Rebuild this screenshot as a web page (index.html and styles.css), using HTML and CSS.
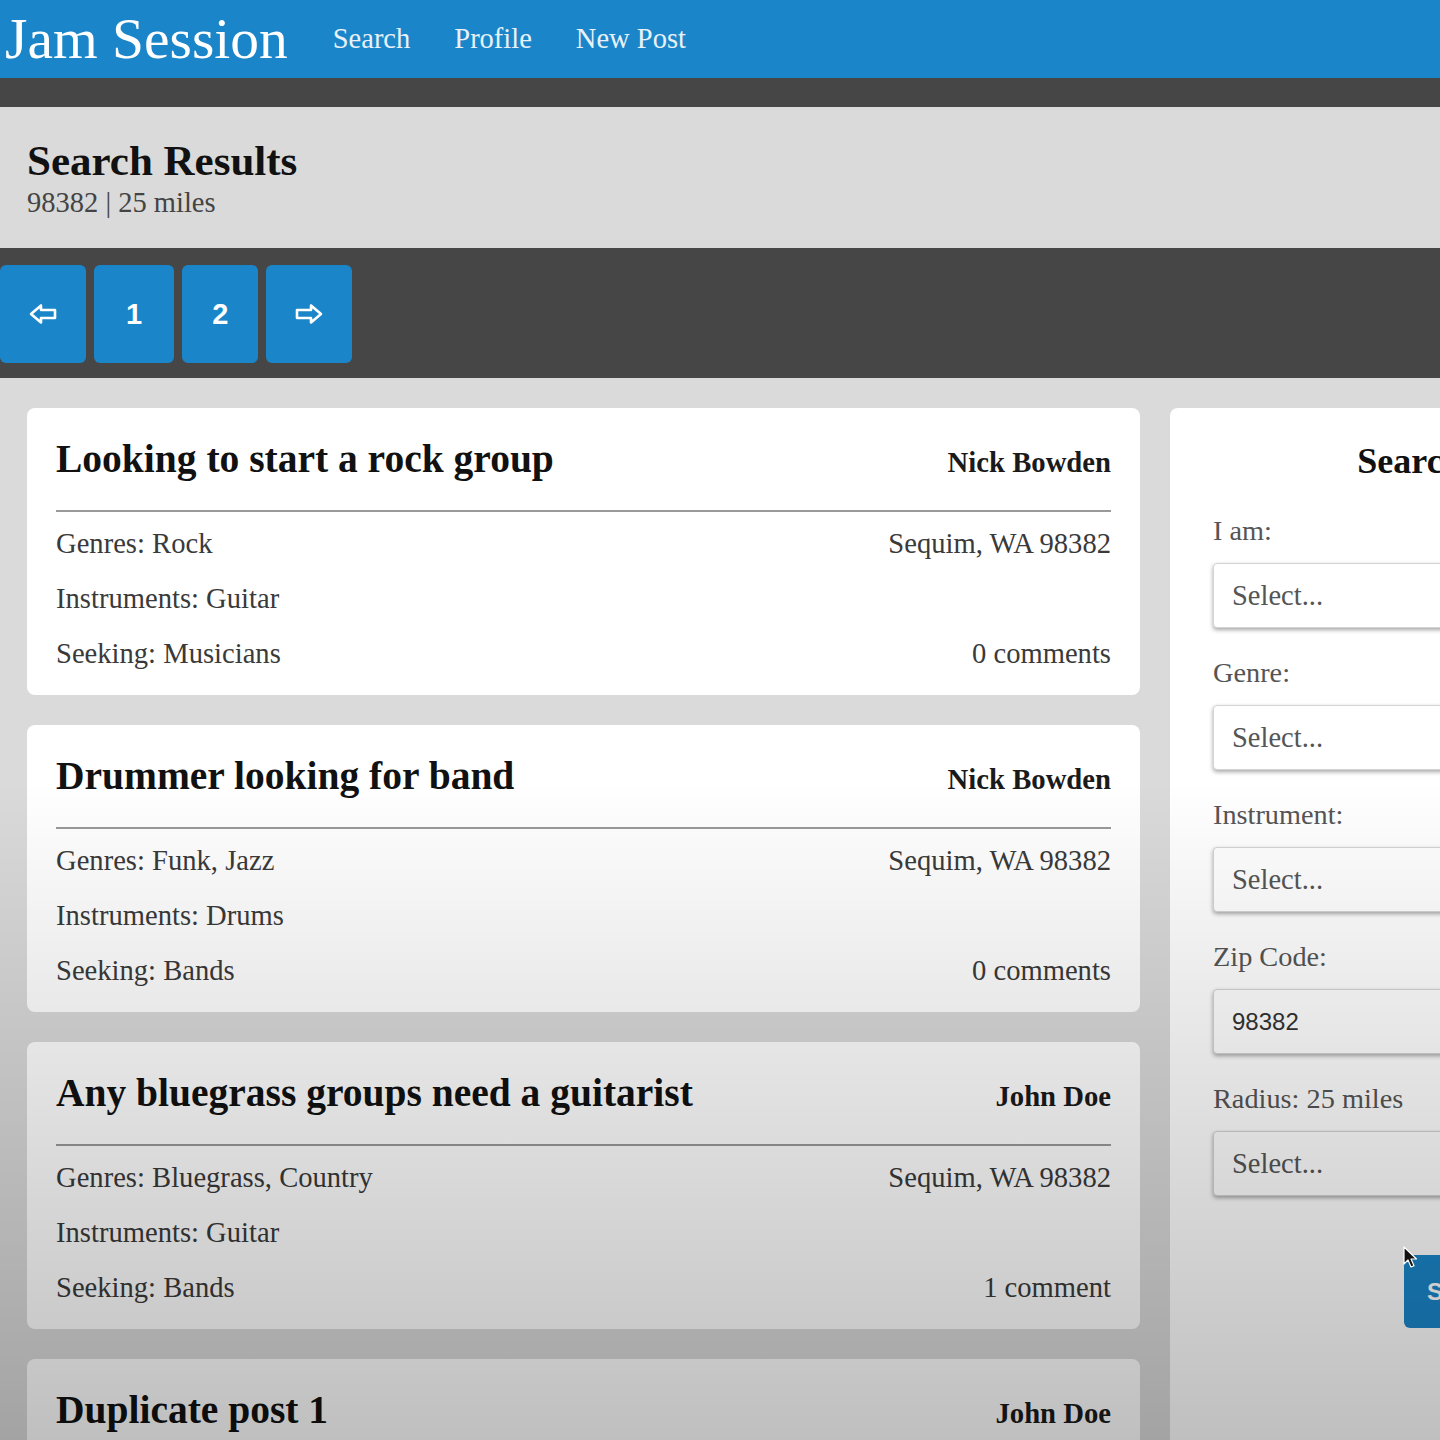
FILE: index.html
```html
<!DOCTYPE html>
<html lang="en">
<head>
<meta charset="utf-8">
<title>Jam Session - Search Results</title>
<link rel="stylesheet" href="styles.css">
</head>
<body>
<header class="topbar">
  <a class="brand">Jam Session</a>
  <nav class="nav">
    <a class="nav-link">Search</a>
    <a class="nav-link">Profile</a>
    <a class="nav-link">New Post</a>
  </nav>
</header>
<div class="subbar"></div>

<section class="results-head">
  <h1 class="results-title">Search Results</h1>
  <div class="results-sub">98382 | 25 miles</div>
</section>

<div class="pager">
  <span class="page-btn arrow-btn">
    <svg width="28" height="22" viewBox="0 0 28 22"><path d="M2 11 L12 2.5 V7 H26 V15 H12 V19.5 Z" fill="none" stroke="#fff" stroke-width="2.6" stroke-linejoin="round"/></svg>
  </span>
  <span class="page-btn">1</span>
  <span class="page-btn page-btn-narrow">2</span>
  <span class="page-btn arrow-btn">
    <svg width="28" height="22" viewBox="0 0 28 22"><path d="M26 11 L16 2.5 V7 H2 V15 H16 V19.5 Z" fill="none" stroke="#fff" stroke-width="2.6" stroke-linejoin="round"/></svg>
  </span>
</div>

<main class="main">
  <div class="posts">
    <article class="card">
      <div class="card-head">
        <h2 class="card-title">Looking to start a rock group</h2>
        <span class="card-author">Nick Bowden</span>
      </div>
      <hr class="card-rule">
      <div class="card-row"><span>Genres: Rock</span><span>Sequim, WA 98382</span></div>
      <div class="card-row"><span>Instruments: Guitar</span><span></span></div>
      <div class="card-row"><span>Seeking: Musicians</span><span>0 comments</span></div>
    </article>

    <article class="card">
      <div class="card-head">
        <h2 class="card-title">Drummer looking for band</h2>
        <span class="card-author">Nick Bowden</span>
      </div>
      <hr class="card-rule">
      <div class="card-row"><span>Genres: Funk, Jazz</span><span>Sequim, WA 98382</span></div>
      <div class="card-row"><span>Instruments: Drums</span><span></span></div>
      <div class="card-row"><span>Seeking: Bands</span><span>0 comments</span></div>
    </article>

    <article class="card">
      <div class="card-head">
        <h2 class="card-title">Any bluegrass groups need a guitarist</h2>
        <span class="card-author">John Doe</span>
      </div>
      <hr class="card-rule">
      <div class="card-row"><span>Genres: Bluegrass, Country</span><span>Sequim, WA 98382</span></div>
      <div class="card-row"><span>Instruments: Guitar</span><span></span></div>
      <div class="card-row"><span>Seeking: Bands</span><span>1 comment</span></div>
    </article>

    <article class="card">
      <div class="card-head">
        <h2 class="card-title">Duplicate post 1</h2>
        <span class="card-author">John Doe</span>
      </div>
      <hr class="card-rule">
      <div class="card-row"><span>Genres: Rock</span><span>Sequim, WA 98382</span></div>
    </article>
  </div>

  <aside class="sidebar">
    <h2 class="side-title">Search</h2>
    <div class="field-label">I am:</div>
    <div class="field">Select...</div>
    <div class="field-label">Genre:</div>
    <div class="field">Select...</div>
    <div class="field-label">Instrument:</div>
    <div class="field">Select...</div>
    <div class="field-label">Zip Code:</div>
    <div class="field field-input">98382</div>
    <div class="field-label">Radius: 25 miles</div>
    <div class="field">Select...</div>
    <div class="actions"><span class="go-btn">Search</span></div>
  </aside>
</main>

<div class="shade"></div>
<svg class="cursor" width="16" height="24" viewBox="0 0 16 24"><path d="M1 1 L1 18 L5 14 L8 21 L11 19.7 L8 13 L13.5 13 Z" fill="#111" stroke="#fff" stroke-width="1.2" stroke-linejoin="round"/></svg>
</body>
</html>
```

FILE: styles.css
```css
html, body {
  margin: 0;
  padding: 0;
  overflow: hidden;
}

body {
  position: relative;
  width: 1440px;
  background: #dadada;
  font-family: "Liberation Serif", "Times New Roman", serif;
  color: #222;
}

/* Header */
.topbar {
  display: flex;
  align-items: flex-start;
  height: 78px;
  padding-left: 5px;
  background: #1a86c9;
}

.brand {
  font-size: 57.5px;
  line-height: 78px;
  color: #fff;
  margin-right: 45px;
  white-space: nowrap;
}

.nav {
  display: flex;
  gap: 44px;
}

.nav-link {
  font-size: 28.5px;
  line-height: 78px;
  color: #e8f1f8;
  white-space: nowrap;
}

.subbar {
  height: 29px;
  background: #464646;
}

/* Results header */
.results-head {
  height: 141px;
  box-sizing: border-box;
  padding: 30px 0 0 27px;
  background: #dadada;
}

.results-title {
  margin: 0;
  font-size: 43px;
  line-height: 48px;
  font-weight: bold;
  color: #111;
}

.results-sub {
  margin-top: 2px;
  font-size: 28.5px;
  line-height: 32px;
  color: #444;
}

/* Pagination */
.pager {
  display: flex;
  gap: 8px;
  height: 130px;
  box-sizing: border-box;
  padding-top: 17px;
  background: #464646;
}

.page-btn {
  display: flex;
  align-items: center;
  justify-content: center;
  height: 98px;
  padding: 0 32px;
  border-radius: 6px;
  background: #1a86c9;
  color: #fff;
  font-family: "Liberation Sans", Arial, sans-serif;
  font-weight: bold;
  font-size: 29px;
}

.page-btn-narrow {
  padding: 0 30px;
}

.arrow-btn {
  padding: 0 29px;
}

/* Main */
.main {
  display: flex;
  align-items: flex-start;
  gap: 30px;
  padding: 30px 0 0 27px;
}

.posts {
  display: flex;
  flex-direction: column;
  gap: 30px;
  width: 1113px;
  flex-shrink: 0;
}

.card {
  background: #fff;
  border-radius: 8px;
  padding: 28px 29px 14px;
}

.card-head {
  display: flex;
  justify-content: space-between;
  align-items: baseline;
}

.card-title {
  margin: 0;
  font-size: 39.5px;
  line-height: 46px;
  font-weight: bold;
  color: #111;
}

.card-author {
  font-size: 28.7px;
  font-weight: bold;
  color: #1a1a1a;
}

.card-rule {
  margin: 28px 0 4px;
  border: 0;
  height: 2px;
  background: #9a9a9a;
}

.card-row {
  display: flex;
  justify-content: space-between;
  font-size: 28.6px;
  line-height: 55px;
  color: #3a3a3a;
}

/* Sidebar */
.sidebar {
  width: 476px;
  flex-shrink: 0;
  box-sizing: border-box;
  min-height: 1200px;
  padding: 33px 43px 0;
  background: #fff;
  border-radius: 8px;
}

.side-title {
  margin: 0 0 35px;
  padding-left: 4px;
  text-align: center;
  font-size: 36px;
  line-height: 40px;
  font-weight: bold;
  color: #111;
}

.field-label {
  font-size: 28.3px;
  line-height: 30px;
  margin-bottom: 17px;
  color: #555;
}

.field {
  display: flex;
  align-items: center;
  height: 65px;
  box-sizing: border-box;
  padding-left: 18px;
  margin-bottom: 30px;
  border: 1px solid #d4d4d4;
  border-radius: 4px;
  background: #fff;
  box-shadow: 0 2px 4px rgba(0, 0, 0, 0.35);
  font-size: 28.5px;
  line-height: 30px;
  color: #555;
}

.field-input {
  font-family: "Liberation Sans", Arial, sans-serif;
  font-size: 24px;
  color: #333;
}

.actions {
  padding: 29px 0 0 191px;
}

.go-btn {
  display: inline-flex;
  align-items: center;
  height: 73px;
  padding: 0 23px;
  border-radius: 6px;
  background: #1a86c9;
  color: #fff;
  font-family: "Liberation Sans", Arial, sans-serif;
  font-weight: bold;
  font-size: 24px;
}

/* Video-like darkening toward the bottom */
.shade {
  position: absolute;
  left: 0;
  top: 0;
  width: 1440px;
  height: 1440px;
  pointer-events: none;
  background: linear-gradient(to bottom, rgba(0, 0, 0, 0) 0, rgba(0, 0, 0, 0) 780px, rgba(0, 0, 0, 0.25) 1440px);
}

.cursor {
  position: absolute;
  left: 1403px;
  top: 1246px;
}
```
